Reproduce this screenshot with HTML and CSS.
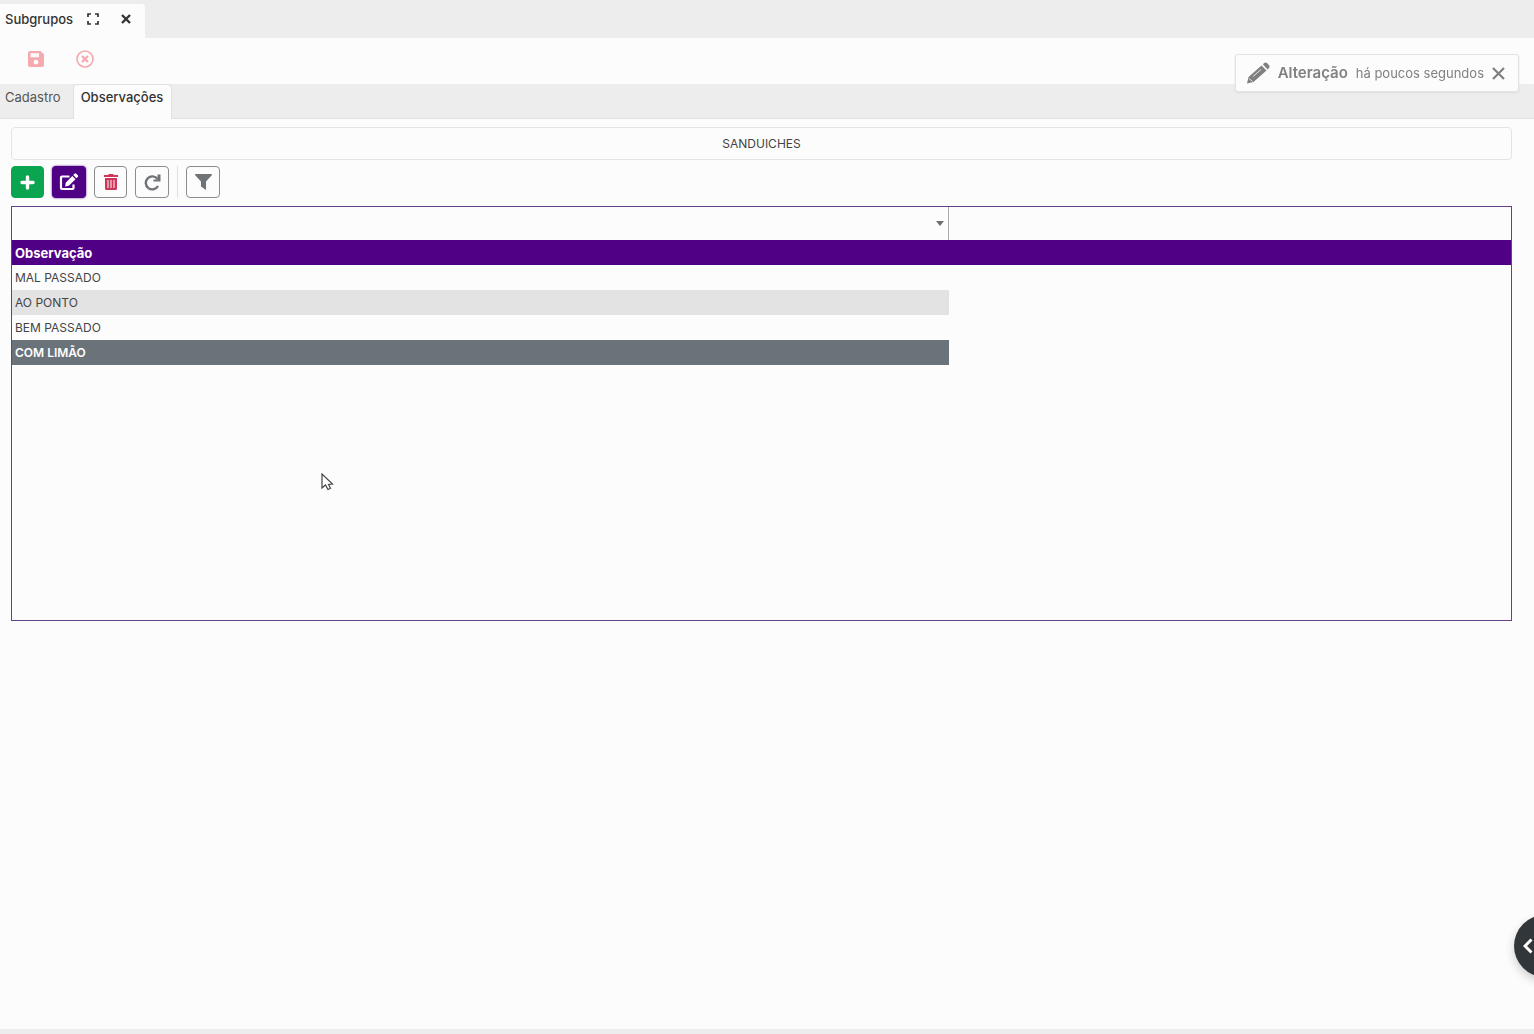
FILE: index.html
```
<!DOCTYPE html>
<html lang="pt-BR">
<head>
<meta charset="utf-8">
<title>Subgrupos</title>
<link rel="stylesheet" href="styles.css">
</head>
<body>
<header class="window-tabs">
  <div class="window-tab">
    <span class="window-title">Subgrupos</span>
    <button class="icon-button" type="button" aria-label="Expandir">
      <svg width="12" height="12" viewBox="0 0 12 12" fill="none" stroke="currentColor" stroke-width="1.700"><path d="M1 4V1h3M8 1h3v3M11 8v3H8M4 11H1V8"/></svg>
    </button>
    <button class="icon-button" type="button" aria-label="Fechar">
      <svg width="10" height="10" viewBox="0 0 10 10" fill="none" stroke="currentColor" stroke-width="2.400"><path d="M1 1l8 8M9 1L1 9"/></svg>
    </button>
  </div>
</header>

<div class="form-actions">
  <button class="icon-button" type="button" aria-label="Salvar">
    <svg width="16" height="16" viewBox="0 0 16 16"><path fill="currentColor" fill-rule="evenodd" d="M2 0h10.500L16 3.500V14a2 2 0 0 1-2 2H2a2 2 0 0 1-2-2V2a2 2 0 0 1 2-2zM2.500 2.200v4h8.500v-4zM8 8.700a2.400 2.400 0 1 0 0 4.800a2.400 2.400 0 1 0 0-4.800z"/></svg>
  </button>
  <button class="icon-button" type="button" aria-label="Cancelar">
    <svg width="18" height="18" viewBox="0 0 18 18" fill="none" stroke="currentColor"><circle cx="9" cy="9" r="8" stroke-width="1.600"/><path stroke-width="2.200" d="M6 6l6 6M12 6l-6 6"/></svg>
  </button>
</div>

<nav class="page-tabs">
  <a class="page-tab" href="#cadastro">Cadastro</a>
  <a class="page-tab page-tab-active" href="#observacoes" aria-current="page">Observações</a>
</nav>

<main class="panel">
  <h1 class="group-name">SANDUICHES</h1>
  <div class="toolbar">
    <button class="tool tool-add" type="button" aria-label="Adicionar">
      <svg width="15" height="15" viewBox="0 0 15 15" fill="none" stroke="currentColor" stroke-width="3.400" stroke-linecap="round"><path d="M7.500 2v11M2 7.500h11"/></svg>
    </button>
    <button class="tool tool-edit" type="button" aria-label="Editar">
      <svg width="20" height="18" viewBox="0 0 20 18"><path fill="none" stroke="currentColor" stroke-width="2.200" stroke-linejoin="round" d="M10.500 3.500H3a1 1 0 0 0-1 1V15a1 1 0 0 0 1 1h10.500a1 1 0 0 0 1-1v-3.500"/><path fill="currentColor" d="M13.300 3l3.200 3.200-6.700 6.600-3.600.6.500-3.700zM14.200 2l1.300-1.300a1.300 1.300 0 0 1 1.800 0l1.500 1.500a1.300 1.300 0 0 1 0 1.800l-1.400 1.300z"/></svg>
    </button>
    <button class="tool tool-delete" type="button" aria-label="Excluir">
      <svg width="14" height="16" viewBox="0 0 14 16"><path fill="currentColor" fill-rule="evenodd" d="M0 1h4l1-1h4l1 1h4v2H0zM1 4h12v10.500a1.500 1.500 0 0 1-1.500 1.500h-9A1.500 1.500 0 0 1 1 14.500zM3.500 6v8h1V6zM6.500 6v8h1V6zM9.500 6v8h1V6z"/></svg>
    </button>
    <button class="tool" type="button" aria-label="Atualizar">
      <svg width="17" height="17" viewBox="0 0 17 17"><path fill="none" stroke="currentColor" stroke-width="2.400" d="M13.500 5A6.500 6.500 0 1 0 14 12"/><path fill="currentColor" d="M16.500.5v7H9.500V5.500h4V.5z"/></svg>
    </button>
    <span class="separator"></span>
    <button class="tool" type="button" aria-label="Filtrar">
      <svg width="17" height="16" viewBox="0 0 17 16"><path fill="currentColor" d="M.7 0h15.600c.7 0 .9.800.5 1.200L11 7.500V16l-5-3.500v-5L.200 1.200C-.2.800 0 0 .7 0z"/></svg>
    </button>
  </div>

  <div class="grid">
    <table class="grid-table">
      <thead>
        <tr class="filter-row">
          <td class="filter-cell">
            <select class="filter-select" aria-label="Filtro de observação"><option></option></select>
            <svg class="caret" width="8" height="5" viewBox="0 0 8 5"><path fill="currentColor" d="M0 0h8L4 5z"/></svg>
          </td>
          <td></td>
        </tr>
        <tr class="heading-row"><th scope="col">Observação</th><td></td></tr>
      </thead>
      <tbody>
        <tr><td>MAL PASSADO</td><td></td></tr>
        <tr class="row-alt"><td>AO PONTO</td><td></td></tr>
        <tr><td>BEM PASSADO</td><td></td></tr>
        <tr class="row-selected"><td>COM LIMÃO</td><td></td></tr>
      </tbody>
    </table>
  </div>
</main>

<footer class="status-bar"></footer>

<div class="toast" role="status">
  <svg width="24" height="22" viewBox="0 0 24 22"><path fill="currentColor" d="M15.500 3.500l5 5L7.500 20 1 21.500 2.500 15zM16.800 2.300L18.300 1a2 2 0 0 1 2.700 0l2 2.200a2 2 0 0 1 0 2.700l-1.400 1.500z"/><path fill="none" stroke="#fcfcfc" stroke-width=".8" d="M7 14.500L15 7.500M3 16.500l3.500 3"/></svg>
  <strong class="toast-title">Alteração</strong>
  <span class="toast-time">há poucos segundos</span>
  <button class="icon-button" type="button" aria-label="Dispensar">
    <svg width="13" height="13" viewBox="0 0 13 13" fill="none" stroke="currentColor" stroke-width="2.200"><path d="M1 1l11 11M12 1L1 12"/></svg>
  </button>
</div>

<button class="drawer-button" type="button" aria-label="Abrir painel">
  <svg width="10" height="16" viewBox="0 0 10 16" fill="none" stroke="currentColor" stroke-width="3"><path d="M8.500 1.500L2 8l6.500 6.500"/></svg>
</button>

<svg class="pointer" width="13" height="18" viewBox="0 0 13 18"><path fill="#fff" stroke="#444" stroke-width="1.200" d="M1 1v14l3.500-3 2.500 4.500 2.500-1.200L7.500 11.500l4-.5z"/></svg>
</body>
</html>
```
FILE: styles.css
```
* {
  box-sizing: border-box;
}

body {
  margin: 0;
  min-height: 100vh;
  display: flex;
  flex-direction: column;
  overflow-x: hidden;
  background: #fcfcfc;
  color: #444;
  font: 13px/16px Inter, "Open Sans", sans-serif;
}

button {
  padding: 0;
  border: 0;
  background: none;
  color: inherit;
  font: inherit;
}

svg {
  display: block;
}

.window-tabs {
  display: flex;
  padding-top: 4px;
  background: #ededed;
}

.window-tab {
  display: flex;
  align-items: center;
  gap: 14px;
  height: 34px;
  padding: 0 14px 4px 5px;
  border-radius: 0 4px 0 0;
  background: #fcfcfc;
  color: #333;
}

.window-title {
  font-weight: 500;
}

.window-tab .icon-button + .icon-button {
  margin-left: 8px;
}

.form-actions {
  display: flex;
  align-items: center;
  gap: 32px;
  height: 46px;
  padding: 0 28px 4px;
  color: #f6a9ae;
}

.page-tabs {
  display: flex;
  height: 35px;
  border-bottom: 1px solid #e0e0e0;
  background: #ededed;
}

.page-tab {
  padding: 5px 12px 0 5px;
  color: #555;
  text-decoration: none;
}

.page-tab-active {
  margin-bottom: -1px;
  padding: 4px 8px 0 7px;
  border: 1px solid #e0e0e0;
  border-bottom: 0;
  border-radius: 4px 4px 0 0;
  background: #fcfcfc;
  color: #333;
  font-weight: 500;
}

.panel {
  flex: 1;
  padding: 8px 22px 0 11px;
}

.group-name {
  height: 33px;
  margin: 0;
  border: 1px solid #e4e4e4;
  border-radius: 4px;
  font-size: 12px;
  font-weight: 400;
  line-height: 32px;
  text-align: center;
}

.toolbar {
  display: flex;
  gap: 8px;
  padding: 6px 0 8px;
}

.tool {
  display: grid;
  place-items: center;
  width: 34px;
  height: 32px;
  border: 1px solid #8c8c8c;
  border-radius: 4px;
  color: #707376;
}

.tool-add,
.tool-delete {
  width: 33px;
}

.tool-add {
  border-color: #0ba551;
  background: #0ba551;
  color: #fff;
}

.tool-edit {
  border-color: #500085;
  background: #500085;
  box-shadow: 0 0 2px #500085;
  color: #fff;
}

.tool-delete {
  color: #cf3459;
}

.separator {
  width: 1px;
  background: #e0e0e0;
}

.grid {
  min-height: 415px;
  border: 1px solid #65418a;
}

.grid-table {
  width: 100%;
  border-spacing: 0;
  table-layout: fixed;
}

.grid-table th,
.grid-table td {
  height: 25px;
  padding: 0 3px;
  text-align: left;
}

.grid-table tbody td {
  font-size: 12px;
}

.grid-table .filter-cell {
  position: relative;
  width: 62.5%;
  height: 33px;
  padding: 0;
  border-right: 1px solid #aaa;
}

.filter-select {
  display: block;
  width: 100%;
  height: 32px;
  border: 0;
  background: transparent;
  appearance: none;
}

.caret {
  position: absolute;
  top: 14px;
  right: 4px;
  color: #707070;
  pointer-events: none;
}

.heading-row {
  background: #500085;
  color: #fff;
}

.row-alt td:first-child {
  background: #e3e3e3;
}

.row-selected td:first-child {
  background: #6b737a;
  color: #fff;
  font-weight: 600;
}

.status-bar {
  height: 5px;
  background: #ededed;
}

.toast {
  position: fixed;
  top: 54px;
  right: 15px;
  display: flex;
  align-items: center;
  gap: 8px;
  height: 38px;
  padding: 0 13px 0 10px;
  border: 1px solid #e2e2e2;
  border-radius: 3px;
  background: #fcfcfc;
  box-shadow: 0 1px 2px #ddd;
  color: #808080;
}

.toast-title {
  font-size: 15px;
  font-weight: 600;
}

.drawer-button {
  position: fixed;
  right: -42px;
  bottom: 57px;
  width: 62px;
  height: 62px;
  padding-left: 9px;
  border-radius: 50%;
  background: #30363a;
  box-shadow: 0 4px 10px #ccc;
  color: #fff;
}

.pointer {
  position: absolute;
  top: 473px;
  left: 321px;
}
```
